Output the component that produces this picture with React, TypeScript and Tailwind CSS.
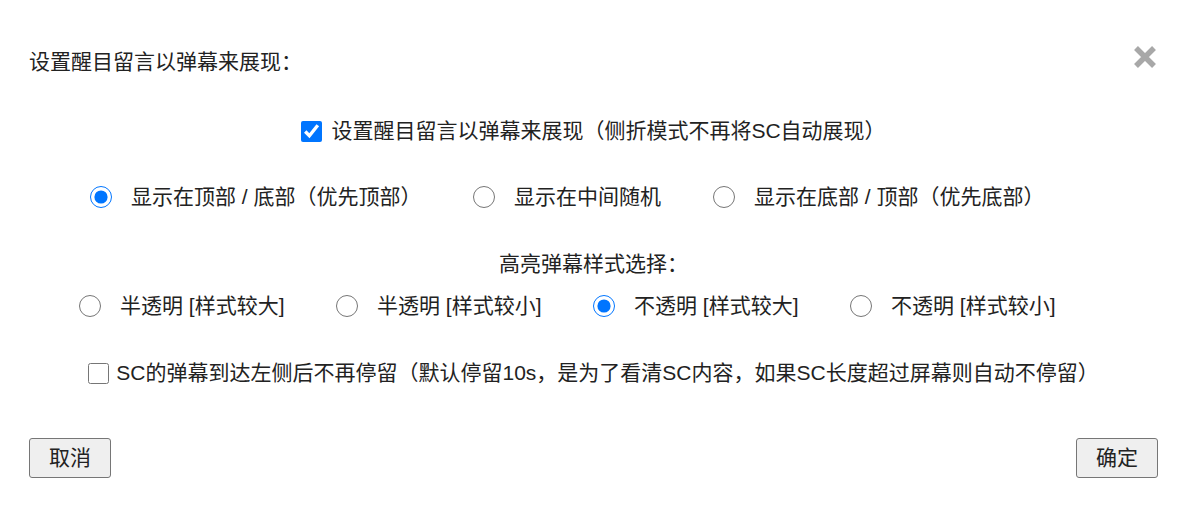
import React from "react"

const font = {
  fontFamily: '"Liberation Sans", "Noto Sans CJK SC", sans-serif',
}

function Radio({ checked }: { checked?: boolean }) {
  return (
    <input
      type="radio"
      readOnly
      checked={!!checked}
      className="m-0 h-[22px] w-[22px] shrink-0 accent-[#0075ff]"
    />
  )
}

function Check({ checked }: { checked?: boolean }) {
  return (
    <input
      type="checkbox"
      readOnly
      checked={!!checked}
      className="m-0 h-[21px] w-[21px] shrink-0 accent-[#0075ff]"
    />
  )
}

const topOptions = [
  { label: "显示在顶部 / 底部（优先顶部）", checked: true, width: "w-[383px]" },
  { label: "显示在中间随机", checked: false, width: "w-[240px]" },
  { label: "显示在底部 / 顶部（优先底部）", checked: false, width: "" },
]

const styleOptions = [
  { label: "半透明 [样式较大]", checked: false },
  { label: "半透明 [样式较小]", checked: false },
  { label: "不透明 [样式较大]", checked: true },
  { label: "不透明 [样式较小]", checked: false },
]

export default function App() {
  return (
    <div
      className="relative flex h-[506px] w-[1187px] flex-col bg-white text-[21px] leading-7 text-[#222]"
      style={font}
    >
      {/* close */}
      <button className="absolute left-[1133px] top-[45px] h-6 w-6">
        <svg viewBox="0 0 24 24" className="h-6 w-6">
          <path
            d="M3 3 L21 21 M21 3 L3 21"
            stroke="#a8a8a8"
            strokeWidth="5.5"
            strokeLinecap="butt"
          />
        </svg>
      </button>

      <div className="pl-[29px] pt-[48px]">设置醒目留言以弹幕来展现：</div>

      <label className="mt-[41px] flex items-center justify-center gap-[9px]">
        <Check checked />
        <span>设置醒目留言以弹幕来展现（侧折模式不再将SC自动展现）</span>
      </label>

      <div className="mt-[38px] flex pl-[90px]">
        {topOptions.map((o) => (
          <label key={o.label} className={`flex items-center gap-[19px] ${o.width}`}>
            <Radio checked={o.checked} />
            <span>{o.label}</span>
          </label>
        ))}
      </div>

      <div className="mt-[39px] text-center">高亮弹幕样式选择：</div>

      <div className="mt-[14px] grid grid-cols-[repeat(4,257px)] pl-[79px]">
        {styleOptions.map((o) => (
          <label key={o.label} className="flex items-center gap-[19px]">
            <Radio checked={o.checked} />
            <span>{o.label}</span>
          </label>
        ))}
      </div>

      <label className="mt-[39px] flex items-center justify-center gap-[7px]">
        <Check />
        <span>SC的弹幕到达左侧后不再停留（默认停留10s，是为了看清SC内容，如果SC长度超过屏幕则自动不停留）</span>
      </label>

      <div className="mt-[51px] flex justify-between px-[29px]">
        <button className="h-10 w-[82px] rounded-[3px] border border-[#767676] bg-[#efefef]">
          取消
        </button>
        <button className="h-10 w-[82px] rounded-[3px] border border-[#767676] bg-[#efefef]">
          确定
        </button>
      </div>
    </div>
  )
}
